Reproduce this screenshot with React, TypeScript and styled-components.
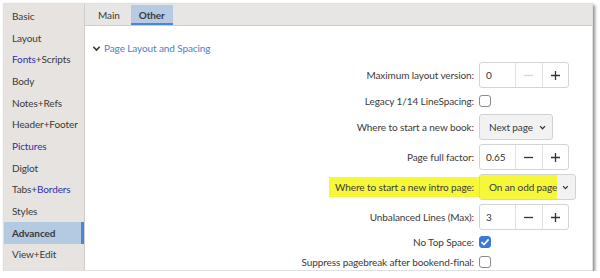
import styled, { createGlobalStyle } from "styled-components";

const Global = createGlobalStyle`
	html, body {
		margin: 0;
		padding: 0;
		background: #ffffff;
	}
	body {
		font-family: Lato, "Noto Sans", sans-serif;
		font-size: 10px;
		letter-spacing: -0.1px;
		color: #333333;
	}
`;

const navItems: { parts: { text: string; blue?: boolean }[]; active?: boolean }[] = [
	{ parts: [{ text: "Basic" }] },
	{ parts: [{ text: "Layout" }] },
	{ parts: [{ text: "Fonts", blue: true }, { text: "+Scripts" }] },
	{ parts: [{ text: "Body" }] },
	{ parts: [{ text: "Notes+Refs" }] },
	{ parts: [{ text: "Header+Footer" }] },
	{ parts: [{ text: "Pictures", blue: true }] },
	{ parts: [{ text: "Diglot" }] },
	{ parts: [{ text: "Tabs+" }, { text: "Borders", blue: true }] },
	{ parts: [{ text: "Styles" }] },
	{ parts: [{ text: "Advanced" }], active: true },
	{ parts: [{ text: "View+Edit" }] }
];

const Chevron = ({ size = 9 }: { size?: number }) => (
	<svg width={size} height={size} viewBox="0 0 10 10">
		<path d="M1.5 3 L5 6.8 L8.5 3" fill="none" stroke="#333" strokeWidth="1.7" />
	</svg>
);

const Spin = ({ value, minusDisabled }: { value: string; minusDisabled?: boolean }) => (
	<SpinBox>
		<SpinValue>{value}</SpinValue>
		<SpinButton>
			<svg width="11" height="11" viewBox="0 0 11 11">
				<path d="M1 5.5 H10" stroke={minusDisabled ? "#d6d6d6" : "#333"} strokeWidth="1.3" />
			</svg>
		</SpinButton>
		<SpinButton>
			<svg width="11" height="11" viewBox="0 0 11 11">
				<path d="M1 5.5 H10 M5.5 1 V10" stroke="#333" strokeWidth="1.3" />
			</svg>
		</SpinButton>
	</SpinBox>
);

const App = () => {
	return (
		<>
			<Global />
			<Window>
				<Sidebar>
					{navItems.map((item, i) => (
						<NavItem key={i} $active={item.active}>
							{item.parts.map((p, j) => (
								<NavPart key={j} $blue={p.blue}>
									{p.text}
								</NavPart>
							))}
						</NavItem>
					))}
				</Sidebar>
				<Main>
					<TabBar>
						<Tab>Main</Tab>
						<Tab $active>Other</Tab>
					</TabBar>
					<Content>
						<SectionHeader>
							<svg width="9" height="9" viewBox="0 0 10 10">
								<path d="M1.5 3 L5 6.8 L8.5 3" fill="none" stroke="#333" strokeWidth="1.7" />
							</svg>
							Page Layout and Spacing
						</SectionHeader>
						<Form>
							<Label $h={26}>Maximum layout version:</Label>
							<Control>
								<Spin value="0" minusDisabled />
							</Control>

							<Label $h={18}>Legacy 1/14 LineSpacing:</Label>
							<Control>
								<Check />
							</Control>

							<Label $h={26}>Where to start a new book:</Label>
							<Control>
								<Combo>
									<ComboText>Next page</ComboText>
									<Chevron />
								</Combo>
							</Control>

							<Label $h={26}>Page full factor:</Label>
							<Control>
								<Spin value="0.65" />
							</Control>

							<Label $h={26}>
								<Mark>Where to start a new intro page:</Mark>
							</Label>
							<Control>
								<Combo $wide>
									<ComboMark>On an odd page</ComboMark>
									<Chevron />
								</Combo>
							</Control>

							<Label $h={26}>Unbalanced Lines (Max):</Label>
							<Control>
								<Spin value="3" />
							</Control>

							<Label $h={16}>No Top Space:</Label>
							<Control>
								<Check $checked>
									<svg width="10" height="10" viewBox="0 0 10 10">
										<path d="M1.5 5.2 L4 7.6 L8.6 2.4" fill="none" stroke="#fff" strokeWidth="1.6" />
									</svg>
								</Check>
							</Control>

							<Label $h={16}>Suppress pagebreak after bookend-final:</Label>
							<Control>
								<Check />
							</Control>
						</Form>
					</Content>
				</Main>
			</Window>
		</>
	);
};

const Window = styled.div`
	margin: 3px 0 0 3px;
	width: 590px;
	height: 268px;
	display: flex;
	background: #ffffff;
	box-shadow: 2px 2px 3px rgba(0, 0, 0, 0.45);
	border: 1px solid #e0e0e0;
	box-sizing: border-box;
	overflow: hidden;
`;

const Sidebar = styled.div`
	width: 80px;
	flex-shrink: 0;
	background: #e6e3e1;
	border-right: 1px solid #cfccc9;
	padding-top: 1px;
	display: flex;
	flex-direction: column;
`;

const NavItem = styled.div<{ $active?: boolean }>`
	height: 21.7px;
	display: flex;
	align-items: center;
	padding-left: 8px;
	white-space: nowrap;
	font-weight: ${(p) => (p.$active ? 700 : 400)};
	background: ${(p) => (p.$active ? "#b4c9e2" : "transparent")};
	box-shadow: ${(p) => (p.$active ? "inset -3px 0 0 #4a86d4" : "none")};
	color: #3a3a3a;
`;

const NavPart = styled.span<{ $blue?: boolean }>`
	color: ${(p) => (p.$blue ? "#2f2fb0" : "inherit")};
`;

const Main = styled.div`
	flex: 1;
	display: flex;
	flex-direction: column;
	min-width: 0;
`;

const TabBar = styled.div`
	height: 22px;
	background: #e8e6e4;
	border-bottom: 1px solid #cfccc9;
	display: flex;
	align-items: flex-end;
	padding-left: 5px;
`;

const Tab = styled.div<{ $active?: boolean }>`
	height: 20px;
	box-sizing: border-box;
	padding: 1px 8px 0;
	margin-right: 3px;
	display: flex;
	align-items: center;
	font-weight: ${(p) => (p.$active ? 700 : 400)};
	background: ${(p) => (p.$active ? "#b6cbe3" : "transparent")};
	border-bottom: 2px solid ${(p) => (p.$active ? "#4a86d4" : "transparent")};
	color: #3a3a3a;
`;

const Content = styled.div`
	flex: 1;
	padding: 14px 16px 0 7px;
	display: flex;
	flex-direction: column;
`;

const SectionHeader = styled.div`
	display: flex;
	align-items: center;
	gap: 3px;
	color: #4a82c8;
	height: 16px;
	margin-bottom: 6px;
`;

const Form = styled.div`
	display: grid;
	grid-template-columns: 1fr 97px;
	column-gap: 5px;
	row-gap: 4px;
`;

const Label = styled.div<{ $h: number }>`
	height: ${(p) => p.$h}px;
	display: flex;
	align-items: center;
	justify-content: flex-end;
	white-space: nowrap;
	color: #3a3a3a;
`;

const Control = styled.div`
	display: flex;
	align-items: center;
`;

const Mark = styled.span`
	background: #f7f73a;
	padding: 4px 5px 4px 6px;
	margin-right: -5px;
`;

const SpinBox = styled.div`
	width: 90px;
	height: 26px;
	box-sizing: border-box;
	border: 1px solid #d4d4d4;
	border-radius: 3px;
	background: #fff;
	display: flex;
`;

const SpinValue = styled.div`
	width: 36px;
	padding-left: 6px;
	box-sizing: border-box;
	display: flex;
	align-items: center;
	border-right: 1px solid #e2e2e2;
`;

const SpinButton = styled.div`
	flex: 1;
	display: flex;
	align-items: center;
	justify-content: center;
	& + & {
		border-left: 1px solid #e2e2e2;
	}
`;

const Check = styled.div<{ $checked?: boolean }>`
	width: 12px;
	height: 12px;
	border-radius: 3px;
	box-sizing: border-box;
	border: 1px solid ${(p) => (p.$checked ? "#3a7ad6" : "#8a8a8a")};
	background: ${(p) => (p.$checked ? "#3a7ad6" : "#fff")};
	display: flex;
	align-items: center;
	justify-content: center;
`;

const Combo = styled.div<{ $wide?: boolean }>`
	height: 26px;
	width: ${(p) => (p.$wide ? "97px" : "74px")};
	box-sizing: border-box;
	border: 1px solid #d2d2d2;
	border-radius: 3px;
	background: #f2f2f2;
	display: flex;
	align-items: center;
	padding-left: ${(p) => (p.$wide ? "0" : "9px")};
	padding-right: 6px;
	gap: 6px;
	overflow: hidden;
	white-space: nowrap;
`;

const ComboText = styled.span`
	color: #3a3a3a;
`;

const ComboMark = styled.span`
	align-self: stretch;
	display: flex;
	align-items: center;
	background: #f7f73a;
	padding-left: 9px;
	margin-right: -1px;
	width: 78px;
	box-sizing: border-box;
	color: #3a3a3a;
`;

export default App;
